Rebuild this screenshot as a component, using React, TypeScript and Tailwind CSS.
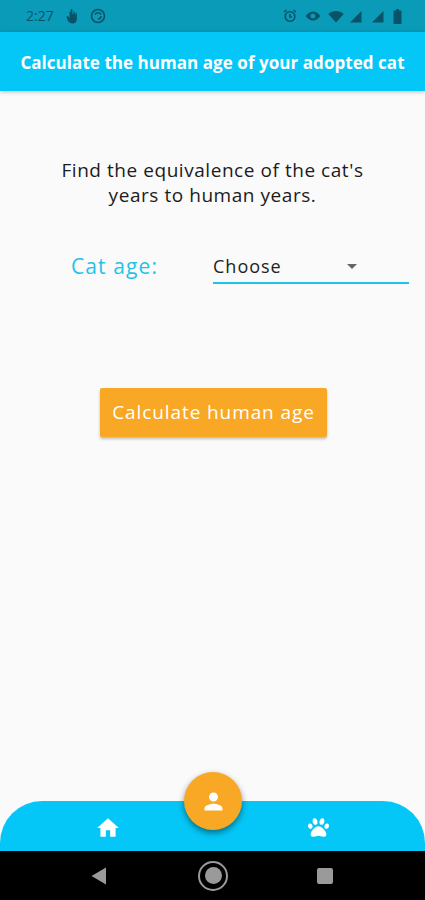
import { FaPaw } from "react-icons/fa";
import { MdHome, MdPerson } from "react-icons/md";

const font = { fontFamily: '"Open Sans", sans-serif' };

const StatusBar = () => (
  <div className="flex h-[32px] items-center justify-between bg-[#0a9bb9] pl-[26px] pr-[23px] text-[#07546a]">
    <div className="flex items-center gap-[12px]">
      <span className="text-[14px] leading-none">2:27</span>
      <svg width="12" height="15" viewBox="0 0 12 15" fill="currentColor">
        <path d="M4.800 0h1.500v5h1V2.500h1.400V5.500h.8V4h1.400v6c0 2.800-1.800 4.500-4.200 4.500S2 12.800 1.500 11L.5 7.500 2 7l1.500 2V2.500h1.300z" />
      </svg>
      <svg width="16" height="16" viewBox="0 0 16 16" fill="none" stroke="currentColor" strokeWidth="1.600">
        <circle cx="8" cy="8" r="6.500" />
        <path d="M5 6.500a3.500 3.500 0 0 1 6 0M11 8a3 3 0 0 1-3 3" />
      </svg>
    </div>
    <div className="flex items-center">
      <svg width="14" height="14" viewBox="0 0 14 14" fill="none" stroke="currentColor" strokeWidth="1.600">
        <circle cx="7" cy="7.500" r="4.800" />
        <path d="M1 3l2.500-2M13 3l-2.500-2M7 5v3h2" />
      </svg>
      <svg width="16" height="14" viewBox="0 0 16 14" fill="currentColor" className="ml-[8px]">
        <path d="M8 2.500C4.500 2.500 2 5 .8 7 2 9 4.500 11.500 8 11.500S14 9 15.200 7C14 5 11.500 2.500 8 2.500zm0 7a2.500 2.500 0 1 1 0-5 2.500 2.500 0 0 1 0 5z" />
      </svg>
      <svg width="16" height="13" viewBox="0 0 16 13" fill="currentColor" className="ml-[7px]">
        <path d="M8 12.500L.3 4C2.300 2 5 1 8 1s5.700 1 7.700 3z" />
      </svg>
      <svg width="13" height="13" viewBox="0 0 13 13" fill="currentColor" className="ml-[5px]">
        <path d="M12.500 1v11.500H1z" />
      </svg>
      <svg width="13" height="13" viewBox="0 0 13 13" fill="currentColor" className="ml-[9px]">
        <path d="M12.500 1v11.500H1z" />
      </svg>
      <svg width="9" height="15" viewBox="0 0 9 15" fill="currentColor" className="ml-[9px]">
        <path d="M3 0h3v1.500h2.500V15H.5V1.500H3z" />
      </svg>
    </div>
  </div>
);

const App = () => {
  return (
    <div className="flex h-[900px] w-[425px] flex-col overflow-hidden bg-[#fafafa]" style={font}>
      <StatusBar />
      <header className="flex h-[59px] items-center justify-center bg-[#04c7f7] pt-[2px] shadow-[0_1px_4px_rgba(0,0,0,0.25)]">
        <h1 className="text-[17px] font-bold tracking-[0.05px] whitespace-nowrap text-white">
          Calculate the human age of your adopted cat
        </h1>
      </header>

      <main className="flex flex-1 flex-col items-center pt-[67px]">
        <p className="w-[320px] text-center text-[19px] leading-[25px] tracking-[0.55px] text-[#1c1c1c]">
          Find the equivalence of the cat's
          <br />
          years to human years.
        </p>
        <div className="mt-[42px] flex w-full items-start pl-[71px] pr-[16px]">
          <span className="w-[142px] pt-[1px] text-[21px] leading-[30px] tracking-[1.1px] text-[#1fc3e8]">Cat age:</span>
          <div className="flex h-[34px] flex-1 items-center justify-between border-b-2 border-[#1fc3e8] pr-[52px]">
            <span className="text-[18px] tracking-[1px] text-[#222]">Choose</span>
            <span className="h-0 w-0 border-x-[5px] border-t-[5px] border-x-transparent border-t-[#666]" />
          </div>
        </div>
        <button className="mt-[104px] ml-[2px] flex h-[49px] w-[227px] items-center justify-center rounded-[2px] bg-[#f9a825] text-[19px] tracking-[0.9px] text-white shadow-[0_2px_3px_rgba(0,0,0,0.25)]">
          Calculate human age
        </button>
      </main>

      <nav className="relative flex h-[50px] items-center rounded-t-[42px] bg-[#04c7f7] pt-[3px] text-white">
        <div className="flex w-[216px] justify-center">
          <MdHome size={26} />
        </div>
        <div className="flex flex-1 justify-center pr-[5px]">
          <FaPaw size={21} />
        </div>
        <button className="absolute top-[-29px] left-[184px] flex h-[58px] w-[58px] items-center justify-center rounded-full bg-[#f9a825] shadow-[0_3px_6px_rgba(0,0,0,0.45)]">
          <MdPerson size={27} />
        </button>
      </nav>

      <div className="flex h-[49px] items-center bg-black">
        <div className="flex w-[198px] justify-center">
          <svg width="18" height="20" viewBox="0 0 18 20" fill="#9a9a9a">
            <path d="M16 1.500v17L1.500 10z" />
          </svg>
        </div>
        <div className="flex h-[30px] w-[30px] items-center justify-center rounded-full border-2 border-[#9a9a9a]">
          <div className="h-[17px] w-[17px] rounded-full bg-[#9a9a9a]" />
        </div>
        <div className="ml-[89px] h-[16px] w-[16px] rounded-[2px] bg-[#9a9a9a]" />
      </div>
    </div>
  );
};

export default App;
